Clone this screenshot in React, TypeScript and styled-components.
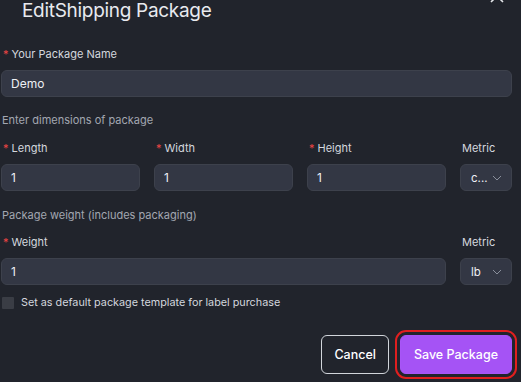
import styled, { createGlobalStyle } from "styled-components";

const GlobalStyle = createGlobalStyle`
  html, body {
    margin: 0;
    padding: 0;
    background: #21242c;
    overflow: hidden;
  }
  body {
    font-family: Inter, "Liberation Sans", Arial, sans-serif;
    -webkit-font-smoothing: antialiased;
  }
`;

const Modal = styled.div`
  width: 511px;
  height: 382px;
  padding: 1px 9px 0 1px;
  background: #21242c;
  color: #e5e7eb;
  box-sizing: content-box;
`;

const Header = styled.div`
  display: flex;
  justify-content: space-between;
  align-items: flex-start;
  height: 20px;
`;

const Title = styled.h2`
  margin: 0 0 0 21px;
  font-size: 19px;
  line-height: 20px;
  font-weight: 400;
  color: #e8eaef;
  letter-spacing: -0.3px;
`;

const Close = styled.svg`
  margin: -12px 8px 0 0;
  flex-shrink: 0;
`;

const Field = styled.div<{ $top?: number }>`
  display: flex;
  flex-direction: column;
  gap: 9px;
  margin-top: ${(p) => p.$top ?? 0}px;
`;

const Label = styled.label`
  font-size: 11px;
  line-height: 14px;
  color: #d4d7de;
  padding-left: 2px;
  white-space: nowrap;
`;

const Star = styled.span`
  color: #ef4444;
  margin-right: 3px;
`;

const Hint = styled.div<{ $top: number }>`
  margin-top: ${(p) => p.$top}px;
  font-size: 11px;
  line-height: 14px;
  color: #a3a7b1;
  padding-left: 1px;
`;

const Grid = styled.div<{ $top: number }>`
  display: grid;
  grid-template-columns: 1fr 1fr 1fr 52px;
  column-gap: 14px;
  margin-top: ${(p) => p.$top}px;
`;

const Wide = styled(Field)`
  grid-column: span 3;
`;

const Box = styled.div`
  height: 27px;
  box-sizing: border-box;
  border: 1px solid #3d414c;
  border-radius: 6px;
  background: #333744;
  display: flex;
  align-items: center;
  padding: 0 9px;
  font-size: 12px;
  color: #eef0f4;
`;

const SelectBox = styled(Box)`
  justify-content: space-between;
  padding: 0 9px 0 10px;
  font-size: 11.5px;
`;

const Chevron = () => (
  <svg width="10" height="6" viewBox="0 0 10 6" fill="none">
    <path d="M1 1l4 4 4-4" stroke="#8a8f9b" strokeWidth="1" />
  </svg>
);

const CheckRow = styled.label`
  display: flex;
  align-items: center;
  gap: 7px;
  margin-top: 11px;
  padding-left: 1px;
  font-size: 10.8px;
  color: #d4d7de;
`;

const Check = styled.span`
  width: 12px;
  height: 12px;
  background: #3a3d45;
  border-radius: 1px;
`;

const Footer = styled.div`
  display: flex;
  justify-content: flex-end;
  gap: 11px;
  margin-top: 26px;
`;

const Button = styled.button<{ $primary?: boolean }>`
  height: 39px;
  border-radius: 6px;
  font-family: inherit;
  font-size: 12.5px;
  font-weight: 500;
  padding: 0 ${(p) => (p.$primary ? 13 : 12)}px;
  color: #ffffff;
  border: 1px solid ${(p) => (p.$primary ? "#a855f7" : "#d1d5db")};
  background: ${(p) => (p.$primary ? "#a553f5" : "transparent")};
  outline: ${(p) => (p.$primary ? "2px solid #e01f1f" : "none")};
  outline-offset: 3px;
`;

export default function App() {
  return (
    <>
      <GlobalStyle />
      <Modal>
        <Header>
          <Title>EditShipping Package</Title>
          <Close width="14" height="14" viewBox="0 0 14 14" fill="none">
            <path d="M1 1l12 12M13 1L1 13" stroke="#e5e7eb" strokeWidth="1.6" />
          </Close>
        </Header>

        <Field $top={26}>
          <Label>
            <Star>*</Star>Your Package Name
          </Label>
          <Box>Demo</Box>
        </Field>

        <Hint $top={16}>Enter dimensions of package</Hint>
        <Grid $top={14}>
          <Field>
            <Label>
              <Star>*</Star>Length
            </Label>
            <Box>1</Box>
          </Field>
          <Field>
            <Label>
              <Star>*</Star>Width
            </Label>
            <Box>1</Box>
          </Field>
          <Field>
            <Label>
              <Star>*</Star>Height
            </Label>
            <Box>1</Box>
          </Field>
          <Field>
            <Label>Metric</Label>
            <SelectBox>
              c...
              <Chevron />
            </SelectBox>
          </Field>
        </Grid>

        <Hint $top={17}>Package weight (includes packaging)</Hint>
        <Grid $top={13}>
          <Wide>
            <Label>
              <Star>*</Star>Weight
            </Label>
            <Box>1</Box>
          </Wide>
          <Field>
            <Label>Metric</Label>
            <SelectBox>
              lb
              <Chevron />
            </SelectBox>
          </Field>
        </Grid>

        <CheckRow>
          <Check />
          Set as default package template for label purchase
        </CheckRow>

        <Footer>
          <Button>Cancel</Button>
          <Button $primary>Save Package</Button>
        </Footer>
      </Modal>
    </>
  );
}
